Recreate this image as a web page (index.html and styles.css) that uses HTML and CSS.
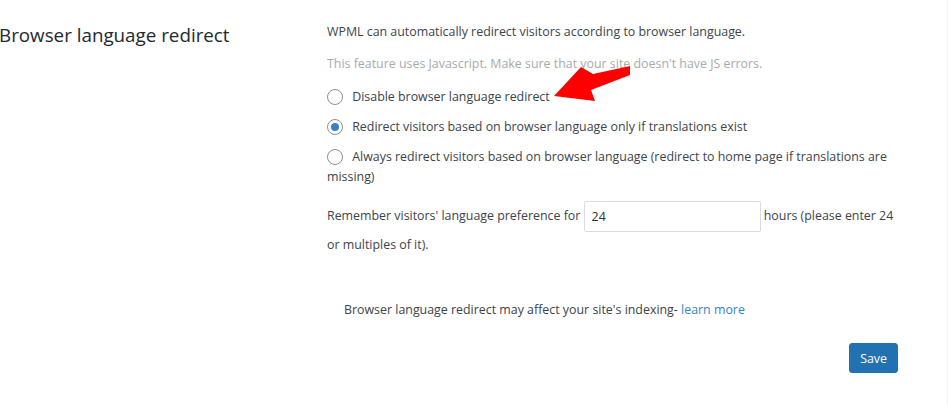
FILE: index.html
```html
<!DOCTYPE html>
<html lang="en">

<head>
    <meta charset="UTF-8">
    <title>Browser language redirect</title>
    <link rel="stylesheet" href="styles.css">
</head>

<body>

    <div class="section">
        <h3 class="section-title">Browser language redirect</h3>

        <div class="section-body">
            <p class="lead">WPML can automatically redirect visitors according to browser language.</p>
            <p class="muted">This feature uses Javascript. Make sure that your site doesn't have JS errors.</p>

            <ul class="options">
                <li>
                    <label class="option">
                        <span class="radio"></span>
                        <span class="option-text">Disable browser language redirect</span>
                    </label>
                    <!-- red annotation arrow -->
                    <svg class="arrow" width="90" height="45" viewBox="0 0 90 45">
                        <polygon points="5,37 32,8 44,15 81,7 81,16 42,31 46,42" fill="#ff0000" />
                    </svg>
                </li>
                <li>
                    <label class="option">
                        <span class="radio checked"></span>
                        <span class="option-text">Redirect visitors based on browser language only if translations exist</span>
                    </label>
                </li>
                <li>
                    <label class="option">
                        <span class="option-text"><span class="radio"></span> Always redirect visitors based on browser language (redirect to home page if translations are missing)</span>
                    </label>
                </li>
            </ul>

            <div class="remember">
                Remember visitors' language preference for
                <input type="text" class="hours" value="24">
                hours (please enter 24 or multiples of it).
            </div>

            <p class="note">Browser language redirect may affect your site's indexing- <a href="#">learn more</a></p>

            <div class="actions">
                <button class="button-primary">Save</button>
            </div>
        </div>
    </div>

</body>

</html>
```

FILE: styles.css
```css
body {
    margin: 0;
    background-color: #fff;
    font-family: "Open Sans", sans-serif;
    font-size: 12.4px;
    color: #3c434a;
}

.section {
    display: flex;
    border-right: 1px solid #f0f0f1;
    width: 947px;
    min-height: 405px;
}

.section-title {
    width: 328px;
    flex: none;
    margin: 22px 0 0 -1px;
    font-size: 18.8px;
    font-weight: normal;
    line-height: 26px;
    color: #23282d;
}

.section-body {
    width: 574px;
    padding-top: 22px;
    line-height: 20px;
}

p {
    margin: 0;
}

.lead {
    margin-bottom: 12px;
}

.muted {
    color: #a7aaad;
    margin-bottom: 13px;
}

.options {
    list-style: none;
    margin: 0;
    padding: 0;
}

.options li {
    position: relative;
    margin-bottom: 10px;
}

.option {
    display: block;
}

.radio {
    display: inline-block;
    width: 14px;
    height: 14px;
    border: 1px solid #8c8f94;
    border-radius: 50%;
    vertical-align: -4px;
    margin-right: 6px;
    position: relative;
    box-sizing: content-box;
}

.radio.checked::after {
    content: "";
    position: absolute;
    top: 3px;
    left: 3px;
    width: 8px;
    height: 8px;
    border-radius: 50%;
    background-color: #3582c4;
}

.arrow {
    position: absolute;
    left: 222px;
    top: -28px;
}

.remember {
    margin-top: 14px;
    line-height: 26px;
}

.hours {
    width: 177px;
    height: 31px;
    box-sizing: border-box;
    border: 1px solid #dcdcde;
    border-radius: 2px;
    padding: 0 7px;
    font-family: inherit;
    font-size: 12.4px;
    color: #2c3338;
    vertical-align: middle;
    margin: 0;
}

.note {
    margin-top: 42px;
    padding-left: 17px;
}

.note a {
    color: #3582c4;
    text-decoration: none;
}

.actions {
    display: flex;
    justify-content: flex-end;
    margin-top: 23px;
    padding-right: 3px;
}

.button-primary {
    background-color: #2271b1;
    border: 1px solid #2271b1;
    border-radius: 3px;
    color: #fff;
    font-family: inherit;
    font-size: 12.4px;
    height: 30px;
    padding: 0 10px;
    cursor: pointer;
}
```
